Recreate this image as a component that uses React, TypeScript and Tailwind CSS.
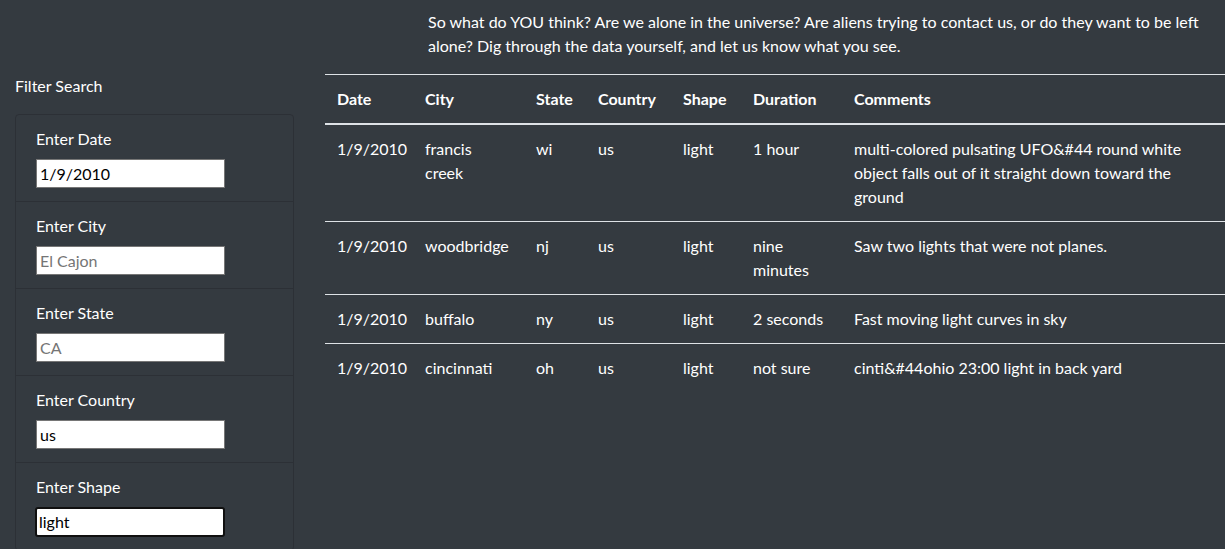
import React from "react";

const rows = [
  { date: "1/9/2010", city: "francis creek", state: "wi", country: "us", shape: "light", duration: "1 hour", comments: "multi-colored pulsating UFO&#44 round white object falls out of it straight down toward the ground" },
  { date: "1/9/2010", city: "woodbridge", state: "nj", country: "us", shape: "light", duration: "nine minutes", comments: "Saw two lights that were not planes." },
  { date: "1/9/2010", city: "buffalo", state: "ny", country: "us", shape: "light", duration: "2 seconds", comments: "Fast moving light curves in sky" },
  { date: "1/9/2010", city: "cincinnati", state: "oh", country: "us", shape: "light", duration: "not sure", comments: "cinti&#44ohio 23:00 light in back yard" },
];

const filters = [
  { label: "Enter Date", value: "1/9/2010", placeholder: "" },
  { label: "Enter City", value: "", placeholder: "El Cajon" },
  { label: "Enter State", value: "", placeholder: "CA" },
  { label: "Enter Country", value: "us", placeholder: "" },
  { label: "Enter Shape", value: "light", placeholder: "", focus: true },
];

export default function App() {
  return (
    <div
      className="w-[1225px] h-[549px] overflow-hidden bg-[#343a40] text-white text-[16px] leading-[24px]"
      style={{ fontFamily: "Lato, 'Noto Sans', sans-serif" }}
    >
      <div className="flex">
        <div className="w-[310px] shrink-0 pl-[15px] pt-[74px]">
          <div className="h-[24px]">Filter Search</div>
          <div className="mt-[16px] w-[279px] rounded-[4px] border border-[#2c3036]">
            {filters.map((f, i) => (
              <div key={i} className={`px-[20px] pt-[12px] pb-[13px] ${i > 0 ? "border-t border-[#2c3036]" : ""}`}>
                <div className="h-[24px] mb-[8px]">{f.label}</div>
                {f.focus ? (
                  <div className="w-[190px] h-[30px] -ml-[1px] bg-white border-2 border-[#101010] rounded-[3px] flex items-center pl-[2px] text-black">
                    {f.value}
                  </div>
                ) : (
                  <div className="w-[189px] h-[29px] bg-white border border-[#767676] flex items-center pl-[3px]">
                    {f.value ? <span className="text-black">{f.value}</span> : <span className="text-[#757575]">{f.placeholder}</span>}
                  </div>
                )}
              </div>
            ))}
          </div>
        </div>
        <div className="flex-1 pl-[15px]">
          <p className="pl-[103px] pt-[10px] pr-[12px] h-[74px]">
            So what do YOU think? Are we alone in the universe? Are aliens trying to contact us, or do they want to be left
            <br />
            alone? Dig through the data yourself, and let us know what you see.
          </p>
          <table className="w-[900px] table-fixed border-collapse text-left">
            <colgroup>
              <col className="w-[88px]" />
              <col className="w-[111px]" />
              <col className="w-[62px]" />
              <col className="w-[85px]" />
              <col className="w-[70px]" />
              <col className="w-[101px]" />
              <col className="w-[383px]" />
            </colgroup>
            <thead>
              <tr className="border-t border-[#dee2e6] border-b-2">
                {["Date", "City", "State", "Country", "Shape", "Duration", "Comments"].map((h) => (
                  <th key={h} className="p-[12px] font-bold align-top">{h}</th>
                ))}
              </tr>
            </thead>
            <tbody>
              {rows.map((r, i) => (
                <tr key={i} className={i > 0 ? "border-t border-[#dee2e6]" : ""}>
                  <td className="p-[12px] align-top">{r.date}</td>
                  <td className="p-[12px] align-top">{r.city}</td>
                  <td className="p-[12px] align-top">{r.state}</td>
                  <td className="p-[12px] align-top">{r.country}</td>
                  <td className="p-[12px] align-top">{r.shape}</td>
                  <td className="p-[12px] align-top">{r.duration}</td>
                  <td className="p-[12px] align-top">{r.comments}</td>
                </tr>
              ))}
            </tbody>
          </table>
        </div>
      </div>
    </div>
  );
}
